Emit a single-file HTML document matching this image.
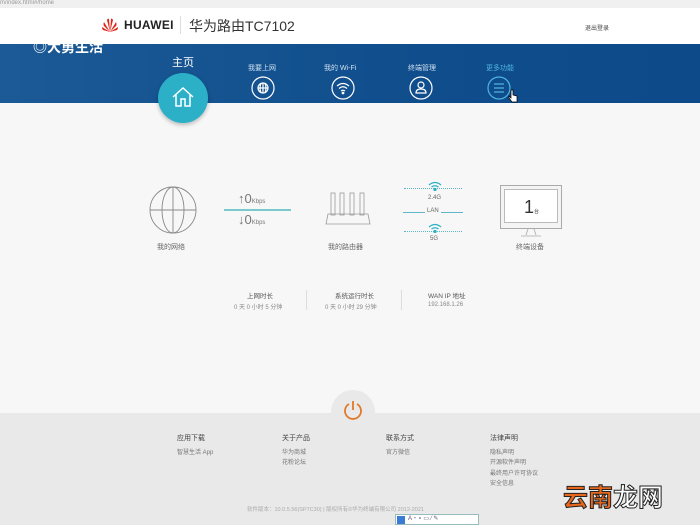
<!DOCTYPE html>
<html><head><meta charset="utf-8"><style>
*{margin:0;padding:0;box-sizing:border-box}
body{width:700px;height:525px;overflow:hidden;position:relative;background:#f7f7f7;font-family:"Liberation Sans","Noto Sans CJK SC",sans-serif;color:#555}
.a{position:absolute}
.t{font-size:7px;color:#666;white-space:nowrap}
</style></head><body>
<div class="a" style="left:0;top:0;width:700px;height:8px;background:#f0f0f0;font-size:6px;color:#999;line-height:6px">m/index.html#/home</div>
<div class="a" style="left:0;top:8px;width:700px;height:36px;background:#fff"></div>
<svg class="a" style="left:101px;top:18px" width="18" height="14" viewBox="0 0 18 14"><g fill="#e2231a"><path d="M9 14 L6 2 Q7 0 8 1Z"/><path d="M9 14 L12 2 Q11 0 10 1Z"/><path d="M9 14 L3 4 Q2 6 3 8Z"/><path d="M9 14 L15 4 Q16 6 15 8Z"/><path d="M9 14 L1 9 Q1 11 2 12Z"/><path d="M9 14 L17 9 Q17 11 16 12Z"/></g></svg>
<div class="a" style="left:124px;top:18px;font-size:12px;font-weight:bold;color:#222;letter-spacing:.3px">HUAWEI</div>
<div class="a" style="left:180px;top:16px;width:1px;height:18px;background:#ddd"></div>
<div class="a" style="left:189px;top:16px;font-size:14px;color:#333">华为路由TC7102</div>
<div class="a t" style="left:585px;top:23px;font-size:6px;color:#444">退出登录</div>
<div class="a" style="left:0;top:44px;width:700px;height:59px;background:linear-gradient(90deg,#1b5a96,#0f4d8c 60%,#0c4a8a)"></div>
<div class="a" style="left:0;top:44px;width:140px;height:12px;overflow:hidden"><div style="position:absolute;left:33px;top:-7px;font-size:14px;font-weight:bold;color:#fff">◎大勇生活</div></div>
<div class="a" style="left:172px;top:54px;font-size:11px;color:#fff">主页</div>
<div class="a" style="left:158px;top:73px;width:50px;height:50px;border-radius:50%;background:#2bb0c8;box-shadow:0 2px 4px rgba(0,0,0,.25)"></div>
<svg class="a" style="left:170px;top:84px" width="26" height="26" viewBox="0 0 26 26" fill="none" stroke="#fff" stroke-width="1.5"><path d="M3 13 L13 4 L23 13 M6 11 V22 H11 V15 H15 V22 H20 V11"/></svg>
<div class="a t" style="left:248px;top:63px;color:#cfe0f0;font-size:7px">我要上网</div>
<div class="a t" style="left:324px;top:63px;color:#cfe0f0;font-size:7px">我的 Wi-Fi</div>
<div class="a t" style="left:408px;top:63px;color:#cfe0f0;font-size:7px">终端管理</div>
<div class="a t" style="left:486px;top:63px;color:#4fb4df;font-size:7px">更多功能</div>
<svg class="a" style="left:250px;top:76px" width="280" height="26" viewBox="0 0 280 26" fill="none" stroke="#fff" stroke-width="1.2">
<circle cx="13" cy="12" r="11"/><circle cx="13" cy="12" r="5"/><path d="M13 7V17M8 12H18M11 7.5Q9 12 11 16.5M15 7.5Q17 12 15 16.5"/>
<circle cx="93" cy="12" r="11"/><path d="M87 10Q93 5 99 10M89 12.5Q93 9 97 12.5M91 15Q93 13.5 95 15"/><circle cx="93" cy="17" r=".8" fill="#fff"/>
<circle cx="171" cy="12" r="11"/><circle cx="171" cy="9" r="3"/><path d="M166 17Q166 13 171 13Q176 13 176 17Z"/>
<circle cx="249" cy="12" r="11" stroke="#4fb4df"/><path d="M244 8H254M244 12H254M244 16H254" stroke="#4fb4df"/></svg>
<svg class="a" style="left:508px;top:89px" width="10" height="14" viewBox="0 0 10 14"><path d="M3 1V9L1 7L1 9L4 13H9V7L5 6V1Z" fill="#fff" stroke="#000" stroke-width=".7"/></svg>
<svg class="a" style="left:148px;top:185px" width="50" height="50" viewBox="0 0 50 50" fill="none" stroke="#888" stroke-width=".9"><circle cx="25" cy="25" r="23"/><ellipse cx="25" cy="25" rx="11" ry="23"/><path d="M25 2V48M2 25H48"/></svg>
<div class="a t" style="left:157px;top:242px">我的网络</div>
<div class="a" style="left:238px;top:191px;font-size:13px;color:#777">↑0<span style="font-size:6px">Kbps</span></div>
<div class="a" style="left:224px;top:209px;width:67px;height:2px;background:#7cc8cf"></div>
<div class="a" style="left:238px;top:212px;font-size:13px;color:#777">↓0<span style="font-size:6px">Kbps</span></div>
<svg class="a" style="left:325px;top:192px" width="46" height="36" viewBox="0 0 46 36" fill="none" stroke="#999" stroke-width=".8"><rect x="6" y="1" width="4" height="22"/><rect x="15" y="1" width="4" height="22"/><rect x="25" y="1" width="4" height="22"/><rect x="35" y="1" width="4" height="22"/><path d="M3 22H43L45 32H1Z"/></svg>
<div class="a t" style="left:328px;top:242px">我的路由器</div>
<div class="a" style="left:404px;top:188px;width:58px;border-top:1px dotted #5bb8c8"></div>
<div class="a" style="left:404px;top:231px;width:58px;border-top:1px dotted #5bb8c8"></div>
<div class="a" style="left:403px;top:212px;width:60px;height:1px;background:#5bb8c8"></div>
<div class="a t" style="left:425px;top:208px;background:#f7f7f7;padding:0 2px;font-size:6px">LAN</div>
<div class="a t" style="left:428px;top:195px;font-size:6px">2.4G</div>
<div class="a t" style="left:430px;top:236px;font-size:6px">5G</div>
<svg class="a" style="left:428px;top:181px" width="14" height="10" viewBox="0 0 14 10" fill="none" stroke="#2bb0c8" stroke-width="1.3"><path d="M1 4Q7 -1 13 4M3.5 6Q7 3.5 10.5 6"/><circle cx="7" cy="8.5" r="1" fill="#2bb0c8"/></svg>
<svg class="a" style="left:428px;top:223px" width="14" height="10" viewBox="0 0 14 10" fill="none" stroke="#2bb0c8" stroke-width="1.3"><path d="M1 4Q7 -1 13 4M3.5 6Q7 3.5 10.5 6"/><circle cx="7" cy="8.5" r="1" fill="#2bb0c8"/></svg>
<div class="a" style="left:500px;top:185px;width:62px;height:44px;border:1px solid #aaa;background:#f4f4f4"></div>
<div class="a" style="left:504px;top:189px;width:54px;height:34px;border:1px solid #bbb;background:#fff"></div>
<div class="a" style="left:524px;top:197px;font-size:18px;color:#333">1<span style="font-size:5px">台</span></div>
<svg class="a" style="left:518px;top:229px" width="26" height="8" viewBox="0 0 26 8" fill="none" stroke="#aaa" stroke-width=".8"><path d="M10 0L8 6M16 0L18 6M3 7H23"/></svg>
<div class="a t" style="left:516px;top:242px">终端设备</div>
<div class="a t" style="left:247px;top:290px;font-size:6.5px;color:#555">上网时长</div>
<div class="a t" style="left:234px;top:302px;font-size:6px;color:#888">0 天 0 小时 5 分钟</div>
<div class="a" style="left:306px;top:290px;width:1px;height:20px;background:#ddd"></div>
<div class="a t" style="left:335px;top:290px;font-size:6.5px;color:#555">系统运行时长</div>
<div class="a t" style="left:325px;top:302px;font-size:6px;color:#888">0 天 0 小时 29 分钟</div>
<div class="a" style="left:401px;top:290px;width:1px;height:20px;background:#ddd"></div>
<div class="a t" style="left:428px;top:290px;font-size:6.5px;color:#555">WAN IP 地址</div>
<div class="a t" style="left:428px;top:302px;font-size:6px;color:#888">192.168.1.26</div>
<div class="a" style="left:0;top:413px;width:700px;height:112px;background:#e9e9e9"></div>
<div class="a" style="left:331px;top:390px;width:44px;height:44px;border-radius:50%;background:#e9e9e9"></div>
<svg class="a" style="left:342px;top:399px" width="22" height="22" viewBox="0 0 22 22" fill="none" stroke="#e07a2a" stroke-width="1.8"><path d="M7 5A8 8 0 1 0 15 5M11 2V11"/></svg>
<div class="a t" style="left:177px;top:433px;font-size:7px;color:#444">应用下载</div>
<div class="a t" style="left:177px;top:447px;font-size:6px;color:#777">智慧生活 App</div>
<div class="a t" style="left:282px;top:433px;font-size:7px;color:#444">关于产品</div>
<div class="a t" style="left:282px;top:447px;font-size:6px;color:#777">华为商城</div>
<div class="a t" style="left:282px;top:457px;font-size:6px;color:#777">花粉论坛</div>
<div class="a t" style="left:386px;top:433px;font-size:7px;color:#444">联系方式</div>
<div class="a t" style="left:386px;top:447px;font-size:6px;color:#777">官方微信</div>
<div class="a t" style="left:490px;top:433px;font-size:7px;color:#444">法律声明</div>
<div class="a t" style="left:490px;top:447px;font-size:6px;color:#777">隐私声明</div>
<div class="a t" style="left:490px;top:457px;font-size:6px;color:#777">开源软件声明</div>
<div class="a t" style="left:490px;top:468px;font-size:6px;color:#777">最终用户许可协议</div>
<div class="a t" style="left:490px;top:478px;font-size:6px;color:#777">安全信息</div>
<div class="a t" style="left:247px;top:505px;font-size:5.5px;color:#aaa">软件版本：10.0.5.56(SP7C30) | 版权所有©华为终端有限公司 2012-2021</div>
<div class="a" style="left:395px;top:514px;width:84px;height:11px;background:#fff;border:1px solid #9bb"></div>
<div class="a" style="left:397px;top:516px;width:8px;height:8px;background:#3a7bd5"></div>
<div class="a t" style="left:408px;top:515px;font-size:6px;color:#557">A ⁃ ∘ ▭ ⁄ ✎</div>
<div class="a" style="left:563px;top:478px;font-size:25px;font-weight:bold;color:#e8671c;-webkit-text-stroke:1px #222;font-family:'Noto Sans CJK SC',sans-serif">云南<span style="color:#fff">龙网</span></div>
</body></html>
